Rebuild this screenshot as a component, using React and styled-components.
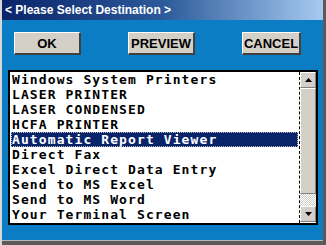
import styled, { createGlobalStyle } from "styled-components";

const Global = createGlobalStyle`
    html, body {
        margin: 0;
        padding: 0;
        background: #7a7a7a;
        overflow: hidden;
    }
`

const items = [
    "Windows System Printers",
    "LASER PRINTER",
    "LASER CONDENSED",
    "HCFA PRINTER",
    "Automatic Report Viewer",
    "Direct Fax",
    "Excel Direct Data Entry",
    "Send to MS Excel",
    "Send to MS Word",
    "Your Terminal Screen",
];

export default function App() {
    const selected = 4;
    return (
        <Window>
            <Global />
            <TitleBar>&lt; Please Select Destination &gt;</TitleBar>
            <Body>
                <ButtonRow>
                    <Button $w={67}>OK</Button>
                    <Button $w={67}>PREVIEW</Button>
                    <Button $w={59}>CANCEL</Button>
                </ButtonRow>
                <ListBox>
                    <Rows>
                        {items.map((item, index) => (
                            <Row key={index} $active={index === selected}>{item}</Row>
                        ))}
                    </Rows>
                    <ScrollBar>
                        <ArrowBtn>
                            <svg width="7" height="4" viewBox="0 0 7 4"><path d="M3.5 0 L7 4 L0 4 Z" fill="#000" /></svg>
                        </ArrowBtn>
                        <Thumb />
                        <Track />
                        <ArrowBtn>
                            <svg width="7" height="4" viewBox="0 0 7 4"><path d="M0 0 L7 0 L3.5 4 Z" fill="#000" /></svg>
                        </ArrowBtn>
                    </ScrollBar>
                </ListBox>
            </Body>
            <BottomEdge />
        </Window>
    );
}

const Window = styled.div`
    width: 326px;
    height: 245px;
    display: flex;
    flex-direction: column;
    box-sizing: border-box;
    background: #0b7dc4;
    border-left: 2px solid #d8d8d8;
    border-right: 3px solid #5a5a5a;
`

const TitleBar = styled.div`
    height: 20px;
    flex: none;
    display: flex;
    align-items: center;
    padding-left: 3px;
    background: linear-gradient(to right, #0a246a 0%, #2c5a9a 50%, #a6caf0 100%);
    color: #fff;
    font-family: "Liberation Sans", Arial, sans-serif;
    font-weight: bold;
    font-size: 12px;
`

const Body = styled.div`
    flex: 1;
    display: flex;
    flex-direction: column;
    padding: 12px 0 0 6px;
`

const ButtonRow = styled.div`
    display: flex;
    gap: 47px;
    padding-left: 6px;
`

const Button = styled.div`
    width: ${p => p.$w}px;
    height: 23px;
    box-sizing: border-box;
    display: flex;
    align-items: center;
    justify-content: center;
    background: #d4d0c8;
    border-top: 1px solid #ffffff;
    border-left: 1px solid #ffffff;
    border-right: 2px solid #404040;
    border-bottom: 2px solid #404040;
    font-family: "Liberation Sans", Arial, sans-serif;
    font-weight: bold;
    font-size: 13px;
    color: #000;
`

const ListBox = styled.div`
    margin-top: 15px;
    width: 310px;
    height: 155px;
    box-sizing: border-box;
    background: #fff;
    border: 2px solid #000;
    display: flex;
`

const Rows = styled.div`
    flex: 1;
    border-right: 1px dashed #000;
`

const Row = styled.div`
    height: 15px;
    line-height: 15px;
    margin: 0 1px;
    padding-left: 1px;
    font-family: "DejaVu Sans Mono", "Liberation Mono", monospace;
    font-weight: bold;
    font-size: 13px;
    letter-spacing: 1.1px;
    white-space: nowrap;
    color: ${p => (p.$active ? "#fff" : "#000")};
    background: ${p => (p.$active ? "#0a246a" : "transparent")};
    outline: ${p => (p.$active ? "1px dotted #c0c0c0" : "none")};
    outline-offset: -1px;
`

const ScrollBar = styled.div`
    width: 16px;
    display: flex;
    flex-direction: column;
    padding-bottom: 1px;
`

const ArrowBtn = styled.div`
    height: 16px;
    box-sizing: border-box;
    display: flex;
    align-items: center;
    justify-content: center;
    background: #d4d0c8;
    border-top: 1px solid #fff;
    border-left: 1px solid #fff;
    border-right: 1px solid #808080;
    border-bottom: 1px solid #808080;
`

const Thumb = styled.div`
    height: 106px;
    box-sizing: border-box;
    background: #d4d0c8;
    border-top: 1px solid #fff;
    border-left: 1px solid #fff;
    border-right: 1px solid #808080;
    border-bottom: 1px solid #808080;
`

const Track = styled.div`
    flex: 1;
    background-color: #eeeeee;
    background-image: repeating-conic-gradient(#d4d0c8 0 25%, #ffffff 0 50%);
    background-size: 2px 2px;
`

const BottomEdge = styled.div`
    height: 4px;
    flex: none;
    background: #5a5a5a;
    border-top: 1px solid #b8b8b8;
`
